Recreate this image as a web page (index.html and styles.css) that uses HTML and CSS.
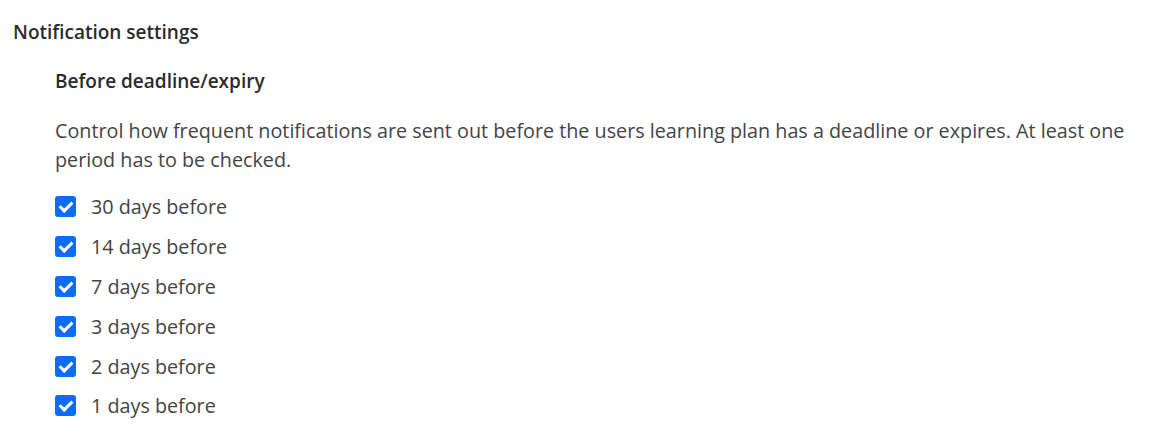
FILE: index.html
```html
<!DOCTYPE html>
<html lang="en">
<head>
    <meta charset="UTF-8">
    <meta name="viewport" content="width=device-width, initial-scale=1.0">
    <title>Notification settings</title>
    <link rel="stylesheet" href="styles.css">
</head>
<body>
    <div class="settings">
        <h2 class="settings-title">Notification settings</h2>
        <div class="group">
            <h3 class="group-title">Before deadline/expiry</h3>
            <p class="group-desc">Control how frequent notifications are sent out before the users learning plan has a deadline or expires. At least one period has to be checked.</p>
            <ul class="periods">
                <li><label><input type="checkbox" checked> 30 days before</label></li>
                <li><label><input type="checkbox" checked> 14 days before</label></li>
                <li><label><input type="checkbox" checked> 7 days before</label></li>
                <li><label><input type="checkbox" checked> 3 days before</label></li>
                <li><label><input type="checkbox" checked> 2 days before</label></li>
                <li><label><input type="checkbox" checked> 1 days before</label></li>
            </ul>
        </div>
    </div>
</body>
</html>
```

FILE: styles.css
```css
body {
    font-family: 'Open Sans', 'Liberation Sans', sans-serif;
    margin: 0;
    padding: 0;
    background-color: white;
    color: #444;
}

.settings {
    padding: 19px 13px;
    width: 1125px;
}

.settings-title {
    font-size: 19px;
    font-weight: 600;
    color: #2b2b2b;
    margin: 0 0 23px;
    line-height: 26px;
}

.group {
    padding-left: 42px;
}

.group-title {
    font-size: 19px;
    font-weight: 600;
    color: #2b2b2b;
    margin: 0 0 22px;
    line-height: 26px;
}

.group-desc {
    font-size: 19.75px;
    line-height: 29px;
    margin: 0 0 13px;
    color: #444;
}

.periods {
    list-style: none;
    margin: 0;
    padding: 0;
}

.periods li {
    height: 39.8px;
    display: flex;
    align-items: center;
}

.periods label {
    display: flex;
    align-items: center;
    gap: 15px;
    font-size: 19.75px;
    color: #444;
}

.periods input[type="checkbox"] {
    appearance: none;
    width: 21px;
    height: 21px;
    margin: 0;
    border-radius: 3px;
    background-color: #0b6cf6;
    position: relative;
}

.periods input[type="checkbox"]:checked::after {
    content: "";
    position: absolute;
    left: 7px;
    top: 3px;
    width: 5px;
    height: 10px;
    border: solid white;
    border-width: 0 3px 3px 0;
    transform: rotate(45deg);
}
```
